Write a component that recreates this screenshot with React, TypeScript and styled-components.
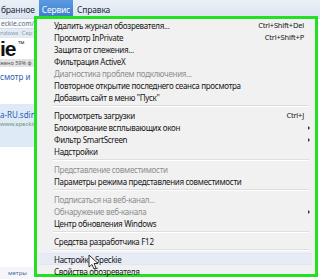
import styled, { createGlobalStyle } from 'styled-components';

const GlobalStyle = createGlobalStyle`
  html, body {
    margin: 0;
    padding: 0;
    background: #ffffff;
  }
  body {
    font-family: 'Noto Sans', 'Open Sans', sans-serif;
  }
`;

type Item = {
  label?: string;
  shortcut?: string;
  disabled?: boolean;
  submenu?: boolean;
  hover?: boolean;
  separator?: boolean;
};

const items: Item[] = [
  { label: 'Удалить журнал обозревателя...', shortcut: 'Ctrl+Shift+Del' },
  { label: 'Просмотр InPrivate', shortcut: 'Ctrl+Shift+P' },
  { label: 'Защита от слежения...' },
  { label: 'Фильтрация ActiveX' },
  { label: 'Диагностика проблем подключения...', disabled: true },
  { label: 'Повторное открытие последнего сеанса просмотра' },
  { label: 'Добавить сайт в меню "Пуск"' },
  { separator: true },
  { label: 'Просмотреть загрузки', shortcut: 'Ctrl+J' },
  { label: 'Блокирование всплывающих окон', submenu: true },
  { label: 'Фильтр SmartScreen', submenu: true },
  { label: 'Надстройки' },
  { separator: true },
  { label: 'Представление совместимости', disabled: true },
  { label: 'Параметры режима представления совместимости' },
  { separator: true },
  { label: 'Подписаться на веб-канал...', disabled: true },
  { label: 'Обнаружение веб-канала', disabled: true, submenu: true },
  { label: 'Центр обновления Windows' },
  { separator: true },
  { label: 'Средства разработчика F12' },
  { separator: true },
  { label: 'Настройки Speckie', hover: true },
  { label: 'Свойства обозревателя' },
];

export default function App() {
  function renderItem(item: Item, index: number) {
    if (item.separator) {
      return <Separator key={index} />;
    }

    return (
      <MenuRow key={index} $hover={item.hover} $disabled={item.disabled}>
        <RowLabel>{item.label}</RowLabel>
        {item.shortcut && <Shortcut>{item.shortcut}</Shortcut>}
        {item.submenu && <SubArrow />}
      </MenuRow>
    );
  }

  return (
    <>
      <GlobalStyle />
      <Screen>
        <MenuBar>
          <BarItem>бранное</BarItem>
          <BarItem $active>Сервис</BarItem>
          <BarItem>Справка</BarItem>
        </MenuBar>
        <AddressRow>eckie.com/</AddressRow>
        <TabRow>ndows&nbsp;&nbsp;Сер</TabRow>
        <LogoRow>
          ie<Trademark>™</Trademark>
        </LogoRow>
        <GrayStrip>жено 59% ф</GrayStrip>
        <PageBlock>
          <LinkText>смотр и</LinkText>
        </PageBlock>
        <SelectedBlock>
          <LinkText>a-RU.sdin</LinkText>
          <UrlText>www.speckie</UrlText>
        </SelectedBlock>
        <Filler />
        <BottomStrip>метры</BottomStrip>

        <Dropdown>{items.map(renderItem)}</Dropdown>

        <Cursor width="11" height="16" viewBox="0 0 11 16">
          <path
            d="M1 1 L1 13 L4 10.5 L6 15 L8 14 L6 9.5 L10 9.5 Z"
            fill="#ffffff"
            stroke="#333333"
            strokeWidth="1"
            strokeLinejoin="round"
          />
        </Cursor>
      </Screen>
    </>
  );
}

const Screen = styled.div`
  position: relative;
  width: 320px;
  height: 279px;
  overflow: hidden;
  display: flex;
  flex-direction: column;
  background: #ffffff;
`;

const MenuBar = styled.div`
  height: 18px;
  display: flex;
  align-items: stretch;
  gap: 1px;
  background: linear-gradient(#eaf0f7, #dbe5f1);
  border-bottom: 1px solid #c9d6e6;
  font-size: 8.5px;
  letter-spacing: -0.2px;
  color: #1e2a3a;
`;

const BarItem = styled.div<{ $active?: boolean }>`
  display: flex;
  align-items: center;
  padding: 0 3px;
  background: ${(p) => (p.$active ? 'linear-gradient(#5c9ae0, #3a7dcc)' : 'transparent')};
  color: ${(p) => (p.$active ? '#ffffff' : '#1e2a3a')};

  &:first-child {
    padding-left: 1px;
  }
`;

const AddressRow = styled.div`
  width: 34px;
  height: 10px;
  line-height: 10px;
  font-size: 6.5px;
  color: #5a6e86;
  background: #f7f9fb;
  border-bottom: 1px solid #d5dde8;
  white-space: nowrap;
  padding-left: 1px;
  box-sizing: border-box;
`;

const TabRow = styled.div`
  width: 34px;
  height: 9px;
  line-height: 9px;
  font-size: 6px;
  color: #8d9cb0;
  background: #e4ebf3;
  white-space: nowrap;
`;

const LogoRow = styled.div`
  height: 21px;
  display: flex;
  align-items: flex-end;
  font-size: 21px;
  line-height: 21px;
  font-weight: 700;
  color: #111111;
  font-family: 'Liberation Sans', sans-serif;
  letter-spacing: -1px;
  white-space: nowrap;
`;

const Trademark = styled.span`
  align-self: flex-start;
  font-size: 7px;
  line-height: 9px;
  font-weight: 400;
  margin-left: 2px;
  margin-top: 1px;
`;

const GrayStrip = styled.div`
  width: 34px;
  height: 8px;
  line-height: 8px;
  font-size: 5.5px;
  color: #555555;
  background: #e3e3e3;
  white-space: nowrap;
`;

const PageBlock = styled.div`
  width: 34px;
  height: 37px;
  padding-top: 4px;
  box-sizing: border-box;
`;

const SelectedBlock = styled.div`
  width: 34px;
  height: 43px;
  background: #dfeaf7;
  padding-top: 5px;
  box-sizing: border-box;
  display: flex;
  flex-direction: column;
`;

const LinkText = styled.div`
  font-size: 8px;
  line-height: 11px;
  color: #2a5db0;
  white-space: nowrap;
`;

const UrlText = styled.div`
  font-size: 6px;
  line-height: 9px;
  color: #6f8f70;
  white-space: nowrap;
`;

const Filler = styled.div`
  flex: 1;
`;

const BottomStrip = styled.div`
  width: 34px;
  height: 12px;
  line-height: 12px;
  font-size: 6px;
  color: #4a6a98;
  background: #f4f6f9;
  padding-left: 8px;
  box-sizing: border-box;
  white-space: nowrap;
`;

const Dropdown = styled.div`
  position: absolute;
  left: 34px;
  top: 16px;
  width: 284px;
  height: 261px;
  box-sizing: border-box;
  border: 3px solid #22e022;
  background: #f1f1f1;
  padding: 0 3px 0 2px;
  display: flex;
  flex-direction: column;
`;

const MenuRow = styled.div<{ $hover?: boolean; $disabled?: boolean }>`
  position: relative;
  height: 12px;
  flex: none;
  display: flex;
  align-items: center;
  padding-left: 15px;
  padding-right: 8px;
  box-sizing: border-box;
  font-size: 8px;
  letter-spacing: -0.3px;
  color: ${(p) => (p.$disabled ? '#8e8e8e' : '#161616')};
  background: ${(p) => (p.$hover ? '#e6ebf6' : 'transparent')};
  border-top: 1px solid ${(p) => (p.$hover ? '#dfe6f5' : 'transparent')};
  border-bottom: 1px solid ${(p) => (p.$hover ? '#dfe6f5' : 'transparent')};
  white-space: nowrap;
`;

const RowLabel = styled.span`
  flex: 1;
`;

const Shortcut = styled.span`
  font-size: 7.5px;
  letter-spacing: -0.2px;
  color: #161616;
`;

const SubArrow = styled.span`
  position: absolute;
  right: 2px;
  top: 4px;
  width: 0;
  height: 0;
  border-top: 2px solid transparent;
  border-bottom: 2px solid transparent;
  border-left: 2px solid #333333;
`;

const Separator = styled.div`
  flex: none;
  height: 1px;
  margin: 2px 3px 2px 14px;
  background: #dedede;
  border-bottom: 1px solid #ffffff;
`;

const Cursor = styled.svg`
  position: absolute;
  left: 88px;
  top: 254px;
`;
